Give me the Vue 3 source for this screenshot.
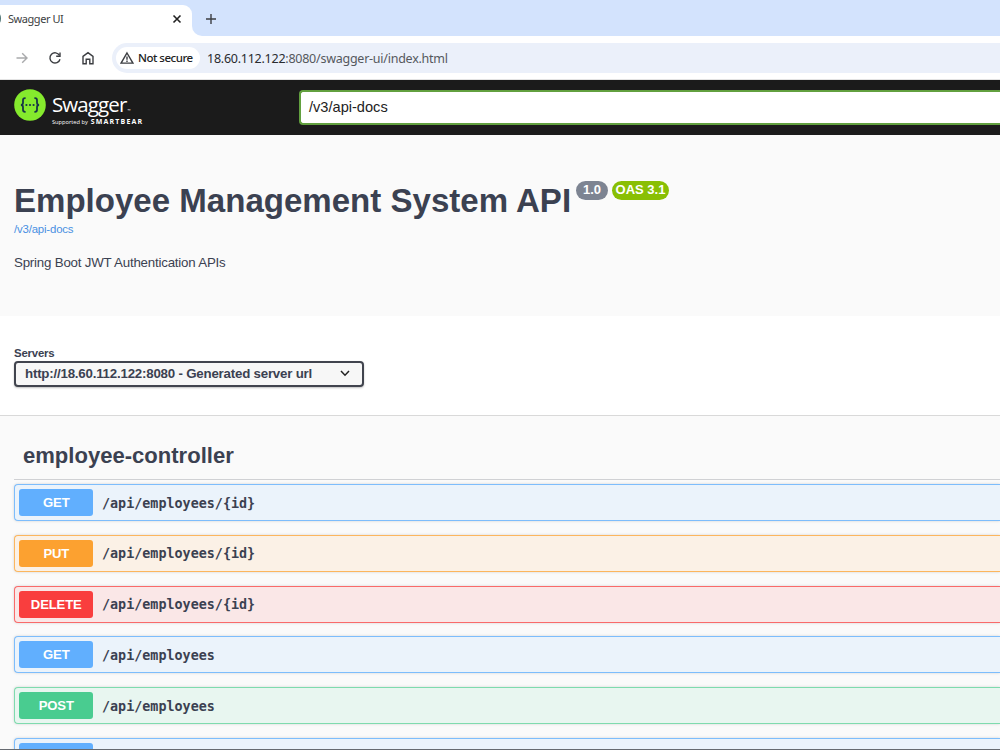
<template>
  <div class="window">
    <div class="tab-strip">
      <div class="tab">
        <span class="favicon"></span>
        <span class="tab-title">Swagger UI</span>
        <svg class="tab-close" width="10" height="10" viewBox="0 0 10 10">
          <path d="M1.5 1.5 8.5 8.5M8.5 1.5 1.5 8.5" />
        </svg>
      </div>
      <div class="strip-rest">
        <svg class="new-tab" width="12" height="12" viewBox="0 0 12 12">
          <path d="M6 1V11M1 6H11" />
        </svg>
      </div>
    </div>

    <div class="toolbar">
      <svg class="nav-icon is-disabled" width="14" height="14" viewBox="0 0 14 14">
        <path d="M1.5 7H12M7.2 2.2 12 7 7.2 11.8" />
      </svg>
      <svg class="nav-icon" width="14" height="14" viewBox="0 0 14 14">
        <path d="M11.5 4.4A5.1 5.1 0 1 0 12 8.2" />
        <path d="M12 1.4V5.2H8.2" />
      </svg>
      <svg class="nav-icon" width="14" height="14" viewBox="0 0 14 14">
        <path d="M2 5.4 7 1.6 12 5.4V12.7H8.8V8.2H5.2V12.7H2Z" />
      </svg>
      <div class="omnibox">
        <div class="security">
          <svg width="14" height="14" viewBox="0 0 14 14">
            <path d="M7 2 12.9 12.1H1.1ZM7 5.6V8.7M7 9.6V11" />
          </svg>
          <span>Not secure</span>
        </div>
        <span class="url"><b>18.60.112.122</b>:8080/swagger-ui/index.html</span>
      </div>
    </div>

    <header class="topbar">
      <div class="logo">
        <svg class="logo-mark" width="32" height="32" viewBox="0 0 32 32">
          <circle cx="16" cy="16" r="15.8" fill="#85ea2d" />
          <path d="M11.6 9.2H11Q9 9.2 9 11.2V13.8Q9 16 6.9 16 9 16 9 18.2V20.8Q9 22.8 11 22.8H11.6" />
          <path d="M20.4 9.2H21Q23 9.2 23 11.2V13.8Q23 16 25.1 16 23 16 23 18.2V20.8Q23 22.8 21 22.8H20.4" />
          <g fill="#173647">
            <circle cx="12.4" cy="16" r="1.1" />
            <circle cx="16" cy="16" r="1.1" />
            <circle cx="19.6" cy="16" r="1.1" />
          </g>
        </svg>
        <div class="logo-text">
          <div class="logo-name">Swagger<small>™</small></div>
          <div class="logo-sub"><span>Supported by</span><b>SMARTBEAR</b></div>
        </div>
      </div>
      <div class="spec-input">/v3/api-docs</div>
    </header>

    <section class="info">
      <div class="title-row">
        <h1>Employee Management System API</h1>
        <span class="badge version">1.0</span>
        <span class="badge oas">OAS 3.1</span>
      </div>
      <a class="spec-link">/v3/api-docs</a>
      <p class="description">Spring Boot JWT Authentication APIs</p>
    </section>

    <section class="servers">
      <span class="servers-label">Servers</span>
      <div class="select">
        <span>http://18.60.112.122:8080 - Generated server url</span>
        <svg width="10" height="7" viewBox="0 0 10 7">
          <path d="M1 1 5 5.2 9 1" />
        </svg>
      </div>
    </section>

    <section class="operations">
      <h2>employee-controller</h2>
      <div v-for="(op, i) in operations" :key="i" class="opblock" :class="op.type">
        <span class="method">{{ op.method }}</span>
        <span class="path">{{ op.path }}</span>
      </div>
    </section>
    <div class="window-edge"></div>
  </div>
</template>

<script setup>
const operations = [
  { type: 'get', method: 'GET', path: '/api/employees/{id}' },
  { type: 'put', method: 'PUT', path: '/api/employees/{id}' },
  { type: 'delete', method: 'DELETE', path: '/api/employees/{id}' },
  { type: 'get', method: 'GET', path: '/api/employees' },
  { type: 'post', method: 'POST', path: '/api/employees' },
  // only the top edge of this row is on screen
  { type: 'get', method: '', path: '' }
]
</script>

<style>
body {
  margin: 0;
  overflow: hidden;
}
</style>

<style scoped>
.window {
  position: relative;
  width: 1000px;
  height: 750px;
  display: flex;
  flex-direction: column;
  overflow: hidden;
  background: #fafafa;
  color: #3b4151;
  font-family: "Liberation Sans", Arial, sans-serif;
}

.window * {
  box-sizing: border-box;
  white-space: nowrap;
  flex-shrink: 0;
}

svg path {
  fill: none;
  stroke: #3c3e42;
  stroke-width: 1.4;
}

.tab-strip {
  display: flex;
  height: 36px;
  background: #fff;
  font-family: "Noto Sans", sans-serif;
}

.tab {
  display: flex;
  align-items: center;
  width: 192px;
  height: 36px;
  padding-top: 1px;
  background: linear-gradient(#d3e3fd, #d3e3fd) top / 100% 15px no-repeat;
  position: relative;
}

.tab::before {
  content: "";
  position: absolute;
  inset: 5px 0 0;
  border-radius: 0 9px 0 0;
  background: #fff;
}

.tab > * {
  position: relative;
}

.favicon {
  width: 6px;
  height: 11px;
  margin-left: -5px;
  border-radius: 50%;
  background: #4e7474;
}

.tab-title {
  width: 165px;
  margin-left: 7px;
  font-size: 11px;
  letter-spacing: -0.45px;
  color: #3c3e42;
}

.tab-close {
  margin-left: -1px;
}

.tab-close path {
  stroke: #222;
  stroke-width: 1.6;
}

.strip-rest {
  flex: 1;
  display: flex;
  align-items: center;
  padding: 1px 0 0 13px;
  border-radius: 0 0 0 10px;
  background: #d3e3fd;
}

.toolbar {
  display: flex;
  align-items: center;
  gap: 19px;
  height: 44px;
  padding-left: 15px;
  background: #fff;
  border-bottom: 1px solid #e3e3e3;
}

.nav-icon.is-disabled path {
  stroke: #a9aaac;
}

.omnibox {
  display: flex;
  align-items: center;
  flex: 1;
  height: 30px;
  margin-left: -2px;
  padding-left: 4px;
  border-radius: 15px 0 0 15px;
  background: #ebf0fa;
  font-family: "Noto Sans", sans-serif;
}

.security {
  display: flex;
  align-items: center;
  gap: 4px;
  width: 84px;
  height: 22px;
  padding-left: 4px;
  border-radius: 11px;
  background: #fff;
  font-size: 11.5px;
  font-weight: 500;
  letter-spacing: -0.5px;
  color: #222;
}

.url {
  margin: 2px 0 0 7px;
  font-size: 12.5px;
  letter-spacing: -0.25px;
  color: #55585d;
}

.url b {
  font-weight: 400;
  color: #292b2f;
}

.topbar {
  display: flex;
  align-items: center;
  height: 55px;
  padding-left: 14px;
  background: #1b1b1b;
}

.logo {
  display: flex;
  gap: 6px;
  width: 285px;
  height: 37px;
}

.logo-mark path {
  stroke: #173647;
  stroke-width: 1.8;
}

.logo-text {
  color: #fff;
  font-family: "Open Sans", sans-serif;
}

.logo-name {
  height: 28px;
  padding-top: 1px;
  font-size: 20.5px;
  line-height: 28px;
  letter-spacing: -0.9px;
}

.logo-name small {
  margin-left: 1px;
  font-size: 4px;
}

.logo-sub {
  display: flex;
  gap: 3px;
  font-size: 5.7px;
  line-height: 10px;
}

.logo-sub b {
  font-size: 7px;
  letter-spacing: 1.15px;
}

.spec-input {
  flex: 1;
  height: 35px;
  padding-left: 8px;
  border: 2px solid #62a03f;
  border-right: 0;
  border-radius: 4px 0 0 4px;
  background: #fff;
  color: #222;
  font-size: 14.6px;
  line-height: 31px;
}

.info {
  height: 181px;
  padding: 44px 14px 0;
}

.title-row {
  display: flex;
  align-items: flex-start;
  height: 42px;
}

h1 {
  width: 557px;
  margin: 0 5px 0 0;
  font-size: 33.05px;
  line-height: 43px;
}

.badge {
  height: 19px;
  margin-top: 2px;
  border-radius: 10px;
  color: #fff;
  font-size: 13px;
  font-weight: 700;
  line-height: 18px;
  text-align: center;
}

.version {
  width: 32px;
  background: #7d8492;
}

.oas {
  width: 57px;
  margin-left: 4px;
  background: #89bf04;
}

.spec-link {
  display: block;
  font-size: 11.4px;
  line-height: 16px;
  letter-spacing: -0.17px;
  color: #4990e2;
}

.description {
  margin: 17px 0 0;
  font-size: 13.3px;
  line-height: 18px;
  letter-spacing: -0.2px;
}

.servers {
  height: 100px;
  padding: 30px 14px 0;
  background: #fff;
  border-bottom: 1px solid #d9d9d9;
}

.servers-label {
  display: block;
  height: 15px;
  font-size: 11.4px;
  font-weight: 700;
  line-height: 15px;
  letter-spacing: -0.2px;
}

.select {
  display: flex;
  align-items: center;
  justify-content: space-between;
  width: 350px;
  height: 26px;
  padding: 0 12px 1px 9px;
  border: 2px solid #41444e;
  border-radius: 4px;
  background: #f7f7f7;
  box-shadow: 0 1px 2px rgba(0, 0, 0, 0.25);
  font-size: 13.3px;
  font-weight: 700;
  letter-spacing: -0.21px;
}

.select path {
  stroke: #222;
  stroke-width: 1.5;
}

.operations {
  padding: 19px 0 0 14px;
}

h2 {
  height: 45px;
  margin: 0 0 4px;
  padding-left: 9px;
  border-bottom: 1px solid #d0d1d4;
  font-size: 22.05px;
  line-height: 42px;
}

.opblock {
  display: flex;
  align-items: center;
  height: 37px;
  margin-bottom: 13.8px;
  padding-left: 4px;
  border: 1px solid #7dbdfc;
  border-right: 0;
  border-radius: 4px 0 0 4px;
  background: #ebf3fb;
  box-shadow: 0 0 3px rgba(0, 0, 0, 0.16);
}

.method {
  width: 73.5px;
  height: 27px;
  padding-left: 1px;
  border-radius: 3px;
  background: #61affe;
  color: #fff;
  font-size: 13.1px;
  font-weight: 700;
  line-height: 27px;
  letter-spacing: -0.15px;
  text-align: center;
}

.path {
  margin-left: 9.5px;
  padding-top: 1px;
  font-family: "DejaVu Sans Mono", monospace;
  font-size: 13.4px;
  font-weight: 700;
}

.put {
  border-color: #fcb65e;
  background: #fbf1e6;
}

.put .method {
  background: #fca130;
}

.delete {
  border-color: #f96a6a;
  background: #fae7e7;
}

.delete .method {
  background: #f93e3e;
}

.post {
  border-color: #7edbae;
  background: #e8f6f0;
}

.post .method {
  background: #49cc90;
}

.window-edge {
  position: absolute;
  left: 0;
  right: 0;
  bottom: 0;
  height: 1px;
  background: #666a70;
}
</style>
